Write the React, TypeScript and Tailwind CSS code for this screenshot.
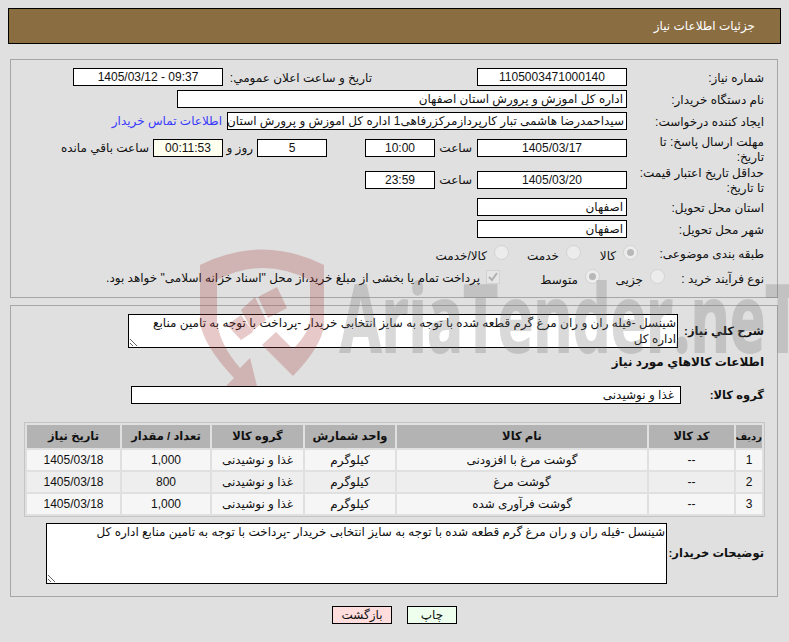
const Field = ({ className = "", children }: { className?: string; children?: React.ReactNode }) => (
  <div className={`h-[18px] shrink-0 border border-black bg-white flex items-center overflow-hidden whitespace-nowrap ${className}`}>
    {children}
  </div>
);

const Row = ({ label, children, className = "h-[18px]", labelClass = "w-[150px]" }: { label: React.ReactNode; children?: React.ReactNode; className?: string; labelClass?: string }) => (
  <div className={`flex items-center shrink-0 ${className}`}>
    <div className={`shrink-0 pr-[13px] leading-[15px] ${typeof label === "string" ? "pt-[2px]" : ""} ${labelClass}`}>{label}</div>
    {children}
  </div>
);

const Radio = ({ checked = false, text, className }: { checked?: boolean; text: string; className: string }) => (
  <div className={`flex items-center shrink-0 ${className}`}>
    <span className="w-[15px] h-[15px] rounded-full border border-[#d2d2d2] bg-[#ececec] flex items-center justify-center shrink-0 -mt-[3px]">
      {checked && <span className="w-[7px] h-[7px] rounded-full bg-[#b8b8b8]" />}
    </span>
    <span className="mr-[7px] mt-[3px]">{text}</span>
  </div>
);

const items = [
  { id: 1, name: "گوشت مرغ با افزودنی", qty: "1,000", bg: "bg-[#f6f6f6]" },
  { id: 2, name: "گوشت مرغ", qty: "800", bg: "bg-[#eeeeee]" },
  { id: 3, name: "گوشت فرآوری شده", qty: "1,000", bg: "bg-[#f6f6f6]" },
];

const headers = ["کد کالا", "نام کالا", "واحد شمارش", "گروه کالا", "تعداد / مقدار", "تاریخ نیاز"];

// watermark: shield logo and site name, lies over the page
const Watermark = () => (
  <svg className="absolute left-0 top-0 pointer-events-none" width="789" height="642" viewBox="0 0 789 642">
    <g fill="#a83c3c" opacity="0.27">
      <path d="M200 265 Q262 234 324 265 L324 325 Q322 346 293 376 L262 345 L276 332 L293 349 Q310 332 310 318 L310 280 Q262 256 217 280 L217 322 Q220 345 240 368 L250 358 L257 386 L226 386 L234 378 Q203 345 200 322 Z" />
      <path d="M258 297 L277 287 L287 308 L268 318 Z" />
      <path d="M241 310 L255 297 L266 320 L252 331 Z" />
      <path d="M227 325 L241 315 L253 332 L241 340 Z" />
    </g>
    <text x="340" y="352" fontFamily="'Open Sans', sans-serif" fontWeight="700" fontSize="94" fill="#707070" stroke="#707070" strokeWidth="2" opacity="0.26" textLength="460" lengthAdjust="spacingAndGlyphs" direction="ltr">
      AriaTender.neT
    </text>
  </svg>
);

export default function App() {
  return (
    <div dir="rtl" className="relative w-[789px] h-[642px] overflow-hidden bg-[#e0e0e0] pt-2 text-[12px] text-[#111] [font-family:'Liberation_Sans','DejaVu_Sans',sans-serif]">
      <div className="mx-2 h-[36px] border border-black bg-[#8b6d42] flex items-center pr-[25px] text-white">
        جزئیات اطلاعات نیاز
      </div>

      <div className="ml-[10px] mr-[11px] mt-[15px] h-[239px] border border-[#a6a6a6] pt-2 flex flex-col">
        <Row label="شماره نیاز:">
          <Field className="w-[150px] justify-center">1105003471000140</Field>
          <div className="w-[254px] pr-[105px] pt-[2px]">تاریخ و ساعت اعلان عمومي:</div>
          <Field className="w-[150px] justify-center">09:37 - 1405/03/12</Field>
        </Row>
        <Row label="نام دستگاه خریدار:" className="h-[18px] mt-1">
          <Field className="w-[450px] pr-[3px]">اداره کل اموزش و پرورش استان اصفهان</Field>
        </Row>
        <Row label="ایجاد کننده درخواست:" className="h-[18px] mt-1">
          <Field className="w-[400px] pr-[2px]">سیداحمدرضا هاشمی تبار کارپردازمرکزرفاهی1 اداره کل اموزش و پرورش استان اصفهان</Field>
          <a className="mr-[5px] text-[#3a3aff] whitespace-nowrap">اطلاعات تماس خریدار</a>
        </Row>
        <Row label={<div className="pt-[3px]">مهلت ارسال پاسخ: تا<br />تاریخ:</div>} className="h-[32px] mt-[2px]">
          <Field className="w-[150px] justify-center">1405/03/17</Field>
          <div className="w-[42px] pr-[5px]">ساعت</div>
          <Field className="w-[70px] justify-center">10:00</Field>
          <div className="w-[38px]" />
          <Field className="w-[70px] justify-center">5</Field>
          <div className="w-[34px] pr-[4px] whitespace-nowrap">روز و</div>
          <Field className="w-[70px] justify-center bg-[#fffff0]!">00:11:53</Field>
          <div className="pr-[4px] whitespace-nowrap">ساعت باقي مانده</div>
        </Row>
        <Row label={<div className="pt-[1px]">حداقل تاریخ اعتبار قیمت:<br />تا تاریخ:</div>} className="h-[32px]">
          <Field className="w-[150px] justify-center">1405/03/20</Field>
          <div className="w-[42px] pr-[5px]">ساعت</div>
          <Field className="w-[70px] justify-center">23:59</Field>
        </Row>
        <Row label="استان محل تحویل:" className="h-[18px] mt-[2px]">
          <Field className="w-[150px] pr-[3px]">اصفهان</Field>
        </Row>
        <Row label="شهر محل تحویل:" className="h-[18px] mt-1">
          <Field className="w-[150px] pr-[3px]">اصفهان</Field>
        </Row>
        <Row label="طبقه بندی موضوعی:" className="h-[18px] mt-[7px]" labelClass="w-[139px] -mt-[2px]">
          <Radio checked text="کالا" className="w-[57px]" />
          <Radio text="خدمت" className="w-[72px]" />
          <Radio text="کالا/خدمت" className="w-[80px]" />
        </Row>
        <Row label="نوع فرآیند خرید :" className="h-[18px] mt-[6px]" labelClass="w-[112px]">
          <Radio text="جزیی" className="w-[65px]" />
          <Radio checked text="متوسط" className="w-[100px]" />
          <span className="w-[14px] h-[14px] shrink-0 border border-[#d2d2d2] bg-[#e6e6e6] flex items-center justify-center -mt-[3px]">
            <svg width="10" height="10" viewBox="0 0 10 10" fill="none" stroke="#b0b0b0" strokeWidth="2">
              <path d="M1 5l3 3 5-7" />
            </svg>
          </span>
          <span className="mr-[6px] whitespace-nowrap">پرداخت تمام یا بخشی از مبلغ خرید،از محل "اسناد خزانه اسلامی" خواهد بود.</span>
        </Row>
      </div>

      <div className="ml-[10px] mr-[11px] mt-[7px] h-[292px] border border-[#a6a6a6] pt-2 flex flex-col">
        <Row label={<b className="whitespace-nowrap text-[11.5px]">شرح كلي نياز:</b>} className="h-[34px]" labelClass="w-[99px]">
          <textarea
            readOnly
            className="w-[550px] h-[34px] shrink-0 border border-black bg-white leading-[16px] px-[1px] outline-none"
            value="شینسل -فیله ران و ران مرغ گرم قطعه شده با توجه به سایز انتخابی خریدار -پرداخت با توجه به تامین منابع اداره کل"
          />
        </Row>
        <div className="pr-[13px] mt-[6px] h-[16px] leading-[16px] font-bold">اطلاعات كالاهاي مورد نياز</div>
        <Row label={<b className="whitespace-nowrap text-[11.5px]">گروه کالا:</b>} className="h-[18px] mt-[16px]" labelClass="w-[96px]">
          <Field className="w-[550px] pr-[6px]">غذا و نوشیدنی</Field>
        </Row>
        <table className="mr-[12px] mt-[18px] w-[741px] table-fixed border-separate border-spacing-[2px] border border-[#c4c4c4]">
          <colgroup>
            <col className="w-[26px]" />
            <col className="w-[85px]" />
            <col className="w-[250px]" />
            <col className="w-[90px]" />
            <col className="w-[91px]" />
            <col className="w-[88px]" />
            <col className="w-[93px]" />
          </colgroup>
          <thead>
            <tr className="h-[23px] bg-[#b3b3b3]">
              <th className="p-0 text-center text-[10px] font-bold whitespace-nowrap">ردیف</th>
              {headers.map((h) => (
                <th key={h} className="p-0 text-center text-[11.5px] font-bold whitespace-nowrap">{h}</th>
              ))}
            </tr>
          </thead>
          <tbody>
            {items.map((item) => (
              <tr key={item.id} className={`h-[20px] text-center ${item.bg}`}>
                <td className="p-0">{item.id}</td>
                <td className="p-0">--</td>
                <td className="p-0">{item.name}</td>
                <td className="p-0">کیلوگرم</td>
                <td className="p-0">غذا و نوشیدنی</td>
                <td className="p-0">{item.qty}</td>
                <td className="p-0">1405/03/18</td>
              </tr>
            ))}
          </tbody>
        </table>
        <Row label={<b className="whitespace-nowrap text-[11.5px]">توضیحات خریدار:</b>} className="h-[61px] mt-[6px]" labelClass="w-[110px]">
          <textarea
            readOnly
            className="w-[621px] h-[61px] shrink-0 border border-black bg-white leading-[16px] px-[1px] outline-none"
            value="شینسل -فیله ران و ران مرغ گرم قطعه شده با توجه به سایز انتخابی خریدار -پرداخت با توجه به تامین منابع اداره کل"
          />
        </Row>
      </div>

      <div className="flex justify-start mt-[9px] pr-[332px]">
        <button className="w-[50px] h-[18px] border border-black bg-[#eeffee] flex items-center justify-center">چاپ</button>
        <button className="w-[60px] h-[18px] mr-[15px] border border-black bg-[#ffdddd] flex items-center justify-center">بازگشت</button>
      </div>

      <Watermark />
    </div>
  );
}
